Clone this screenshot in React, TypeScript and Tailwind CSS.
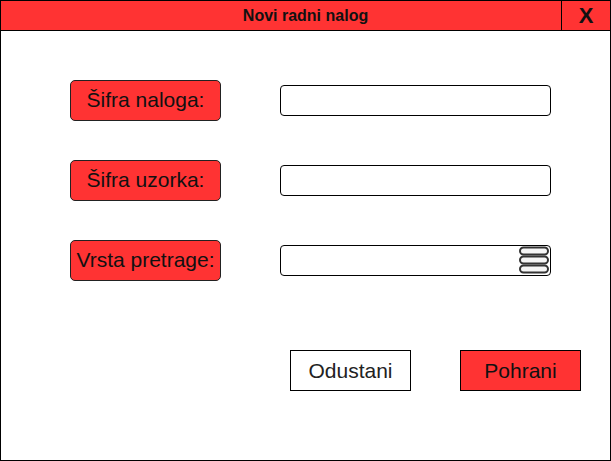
import React from 'react';

const FIELDS = [
  { label: 'Šifra naloga:', kind: 'text' },
  { label: 'Šifra uzorka:', kind: 'text' },
  { label: 'Vrsta pretrage:', kind: 'select' },
];

const MenuIcon = () => (
  <svg width="30" height="28" viewBox="0 0 30 28" className="block">
    {[1.5, 10.5, 19.5].map(y => (
      <rect key={y} x="1" y={y} width="28" height="7" rx="3.5" fill="#f5f5f5" stroke="#333" strokeWidth="2" />
    ))}
  </svg>
);

export default function App() {
  return (
    <div className="w-[611px] h-[461px] border border-black bg-white flex flex-col font-['Liberation_Sans',Arial,sans-serif]">
      <div className="h-[30px] shrink-0 flex bg-[#ff3333] border-b border-black">
        <div className="flex-1 flex items-center justify-center pl-[49px] text-[16px] font-bold text-[#111]">Novi radni nalog</div>
        <div className="w-[49px] border-l border-black flex items-center justify-center text-[22px] font-bold text-[#111]">X</div>
      </div>

      <div className="flex flex-col gap-10 pt-[49px] pl-[69px]">
        {FIELDS.map(f => (
          <div key={f.label} className="flex items-center h-10">
            <div className="w-[151px] h-[41px] rounded-[5px] border border-[#222] bg-[#ff3333] flex items-center justify-center text-[21px] text-[#111] whitespace-nowrap">
              {f.label}
            </div>
            <div className="ml-[59px] w-[271px] h-[31px] rounded-[4px] border border-black bg-white flex items-center justify-end pr-[1px]">
              {f.kind === 'select' && <MenuIcon />}
            </div>
          </div>
        ))}
      </div>

      <div className="flex pl-[289px] pt-[70px] gap-[49px]">
        <button className="w-[121px] h-[41px] border border-black bg-white text-[21px] text-[#222]">Odustani</button>
        <button className="w-[121px] h-[41px] border border-black bg-[#ff3333] text-[21px] text-[#111]">Pohrani</button>
      </div>
    </div>
  );
}
